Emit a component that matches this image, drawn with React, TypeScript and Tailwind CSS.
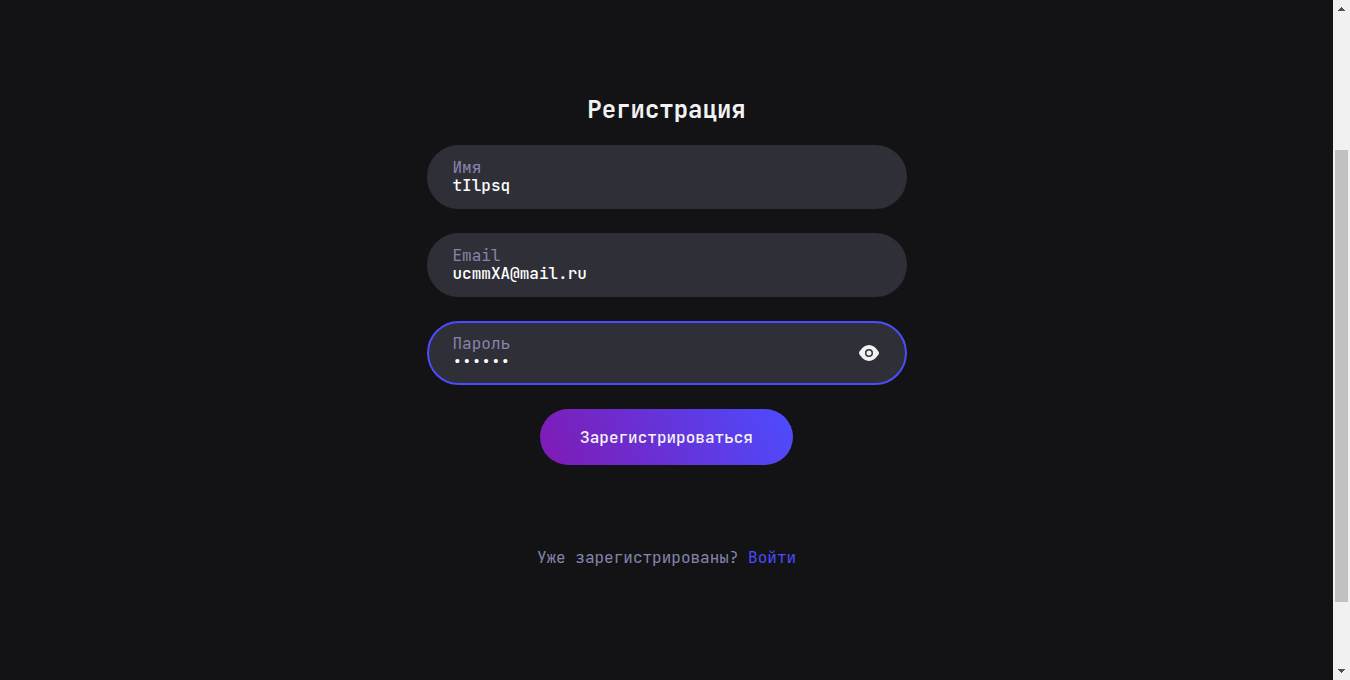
import React from "react";

type FieldProps = {
  label: string;
  value: string;
  focused?: boolean;
  children?: React.ReactNode;
};

function Field({ label, value, focused = false, children }: FieldProps) {
  return (
    <label
      className={`flex h-16 w-[480px] items-center justify-between rounded-[32px] border-2 bg-[#2f2f37] px-6 ${
        focused ? "border-[#4c4cff]" : "border-[#2f2f37]"
      }`}
    >
      <span className="flex flex-col text-base leading-[18px]">
        <span className="text-[#8585ad]">{label}</span>
        <span className="h-[18px] font-medium text-white">{value}</span>
      </span>
      {children}
    </label>
  );
}

function EyeIcon() {
  return (
    <svg width="24" height="24" viewBox="0 0 24 24" fill="none">
      <path
        fillRule="evenodd"
        clipRule="evenodd"
        d="M2 12C2 11 2.8 10 3.7 9C5.6 6.3 8.4 4 12 4S18.4 6.3 20.3 9C21.2 10 22 11 22 12S21.2 14 20.3 15C18.4 17.7 15.6 20 12 20S5.6 17.7 3.7 15C2.8 14 2 13 2 12ZM8 12a4 4 0 1 0 8 0a4 4 0 1 0-8 0ZM9.5 12a2.5 2.5 0 1 1 5 0a2.5 2.5 0 1 1-5 0Z"
        fill="#f2f2f3"
      />
    </svg>
  );
}

function Scrollbar() {
  return (
    <div className="flex h-full w-[17px] shrink-0 flex-col items-center bg-[#f1f1f1]">
      <svg className="h-[17px] w-[17px] shrink-0" viewBox="0 0 17 17" shapeRendering="crispEdges">
        <path d="M8 7h1v1h1v1h1v1h1v1H5v-1h1V9h1V8h1z" fill="#505050" />
      </svg>
      <div className="mt-[133px] h-[452px] w-[13px] bg-[#c1c1c1]" />
      <svg className="mt-auto h-[17px] w-[17px] shrink-0" viewBox="0 0 17 17" shapeRendering="crispEdges">
        <path d="M5 6h7v1h-1v1h-1v1H9v1H8V9H7V8H6V7H5z" fill="#505050" />
      </svg>
    </div>
  );
}

export default function App() {
  return (
    <div className="flex h-[680px] w-[1350px] overflow-hidden bg-[#131315] font-['JetBrains_Mono','DejaVu_Sans_Mono',monospace]">
      <main className="flex flex-1 flex-col items-center pt-[94px]">
        <h1 className="text-2xl leading-8 font-bold text-[#f2f2f3]">Регистрация</h1>
        <form className="mt-[19px] flex flex-col items-center gap-6">
          <Field label="Имя" value="tIlpsq" />
          <Field label="Email" value="ucmmXA@mail.ru" />
          <Field label="Пароль" value="••••••" focused>
            <EyeIcon />
          </Field>
          <button
            type="button"
            className="h-14 w-[253px] rounded-full bg-[linear-gradient(63deg,#801ab3_0%,#4c4cff_100%)] pt-0.5 text-base font-medium text-[#f2f2f3]"
          >
            Зарегистрироваться
          </button>
        </form>
        <p className="mt-[81px] text-base leading-6 text-[#8585ad]">
          Уже зарегистрированы?{" "}
          <a className="text-[#4c4cff]">Войти</a>
        </p>
      </main>
      <Scrollbar />
    </div>
  );
}
